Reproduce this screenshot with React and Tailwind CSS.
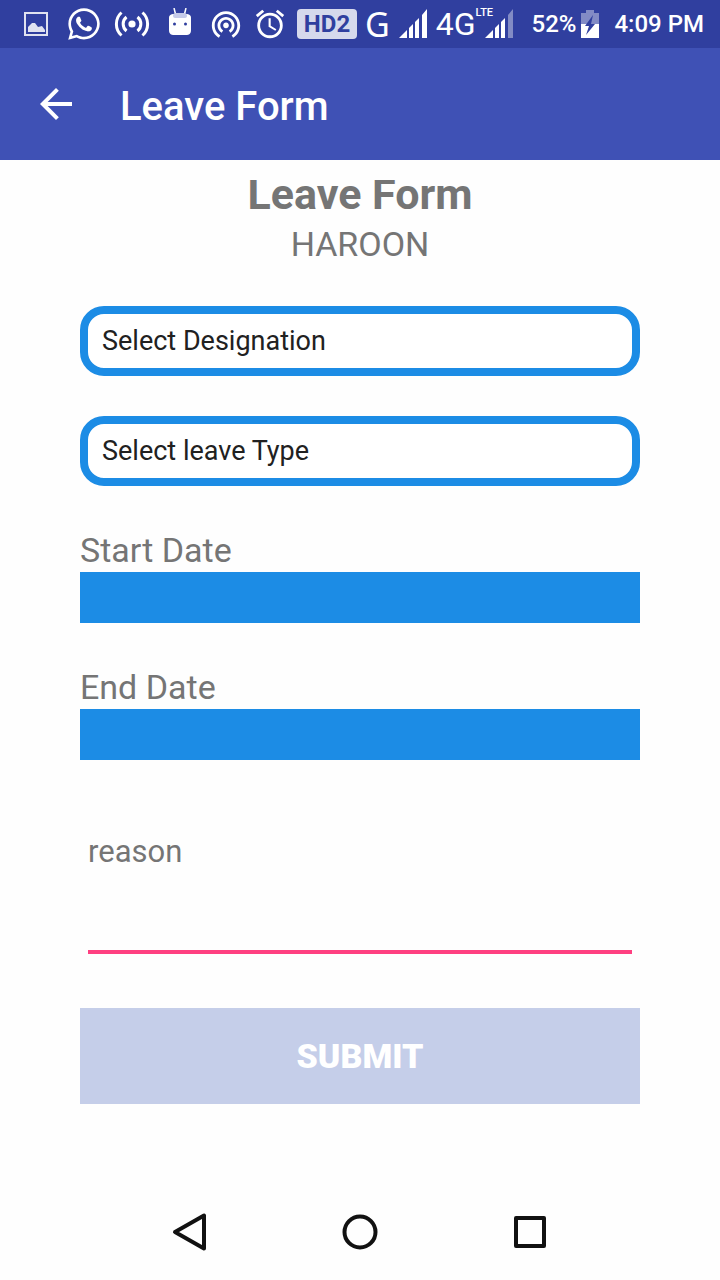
import { useState } from 'react';
import { FaWhatsapp } from 'react-icons/fa';
import { MdAccessAlarm, MdArrowBack, MdWifiTethering } from 'react-icons/md';

const designations = ['Manager', 'Developer', 'Accountant'];
const leaveTypes = ['Casual Leave', 'Sick Leave', 'Annual Leave'];

const PictureIcon = () => (
  <svg width="26" height="26" viewBox="0 0 26 26" className="opacity-85">
    <rect x="2" y="2" width="22" height="22" fill="none" stroke="currentColor" strokeWidth="2" />
    <path d="M5 21v-5l2-2 2-2 3 0 3 4 4-1 3 4v2z" fill="currentColor" />
  </svg>
);

const BroadcastIcon = () => (
  <svg width="36" height="28" viewBox="0 0 36 28" fill="none" stroke="currentColor" strokeWidth="3">
    <circle cx="18" cy="14" r="3.6" fill="currentColor" stroke="none" />
    <path d="M12.5 7a9 9 0 0 0 0 14M23.5 7a9 9 0 0 1 0 14" />
    <path d="M7.5 2.500a15.500 15.500 0 0 0 0 23M28.5 2.500a15.500 15.500 0 0 1 0 23" />
  </svg>
);

const AndroidIcon = () => (
  <svg width="24" height="32" viewBox="0 0 24 32">
    <path d="M6 0l1.500 6M18 0l-1.500 6" stroke="currentColor" strokeWidth="1.500" />
    <path d="M1 10c0-3 2-4 5-4h12c3 0 5 1 5 4v12c0 4-2 5-5 5H6c-3 0-5-1-5-5z" fill="currentColor" />
    <path d="M5 8c0-2 1-3 3-3h8c2 0 3 1 3 3 0 1-1 2-2 2H7c-1 0-2-1-2-2z" fill="#c5cae9" />
    <circle cx="6.500" cy="16" r="1.500" fill="#303f9f" />
    <circle cx="17.500" cy="16" r="1.500" fill="#303f9f" />
  </svg>
);

const SignalIcon = () => (
  <svg width="30" height="30" viewBox="0 0 30 30" fill="currentColor">
    <path d="M1 29l8-8v8zM11 19l4-4v14h-4zM17 13l4-4v20h-4zM24 6l5-6v29h-5z" />
  </svg>
);

const WeakSignalIcon = () => (
  <svg width="30" height="30" viewBox="0 0 30 30" fill="currentColor">
    <path d="M1 29l8-8v8zM11 19l4-4v14h-4zM17 13l4-4v20h-4z" />
    <path d="M24 6l5-6v29h-5z" opacity="0.4" />
  </svg>
);

const BatteryIcon = () => (
  <svg width="20" height="30" viewBox="0 0 20 30" fill="currentColor">
    <path d="M1 4h5V1h8v3h5v11H1z" opacity="0.4" />
    <path d="M1 15h18v14H1z" />
    <path d="M13 6L5 17h4L6 26l9-11h-4z" fill="#303f9f" />
  </svg>
);

function StatusBar() {
  return (
    <div className="flex h-12 items-center bg-[#303f9f] pr-4 pl-3 text-white">
      <div className="flex items-center">
        <span className="flex w-12 justify-center"><PictureIcon /></span>
        <span className="flex w-12 justify-center"><FaWhatsapp size={36} /></span>
        <span className="flex w-12 justify-center"><BroadcastIcon /></span>
        <span className="flex w-12 justify-center"><AndroidIcon /></span>
        <span className="flex w-11 justify-center"><MdWifiTethering size={34} /></span>
        <span className="flex w-11 justify-center"><MdAccessAlarm size={34} /></span>
      </div>
      <div className="ml-[5px] flex items-center gap-2">
        <span className="flex h-[30px] w-15 items-center justify-center rounded bg-[#d6d9ec] text-2xl font-bold text-[#303f9f]">HD2</span>
        <span className="font-['Noto_Sans'] text-[34px] leading-9">G</span>
        <SignalIcon />
        <div className="flex items-center">
          <span className="text-[32px] leading-9">4G</span>
          <div className="relative ml-2">
            <span className="absolute -top-1 -left-2 text-[11px] leading-4 font-medium">LTE</span>
            <WeakSignalIcon />
          </div>
        </div>
      </div>
      <div className="ml-auto flex items-center text-2xl font-medium">
        <span>52%</span>
        <span className="mr-[14px] ml-1"><BatteryIcon /></span>
        <span>4:09 PM</span>
      </div>
    </div>
  );
}

function AppBar() {
  return (
    <header className="flex h-28 items-center gap-10 bg-[#3f51b5] px-8 text-white">
      <button type="button" aria-label="Back">
        <MdArrowBack size={48} />
      </button>
      <span className="pt-1.5 text-[40px] font-medium">Leave Form</span>
    </header>
  );
}

function Dropdown({ label, options, value, onChange }) {
  return (
    <select
      aria-label={label}
      value={value}
      onChange={(e) => onChange(e.target.value)}
      className="h-[70px] w-full appearance-none rounded-3xl border-8 border-[#1c8ce5] bg-white px-[14px] text-[27px] text-[#212121] outline-none"
    >
      <option value="">{label}</option>
      {options.map((option) => (
        <option key={option} value={option}>{option}</option>
      ))}
    </select>
  );
}

function DateField({ id, label, value, onChange }) {
  return (
    <div className="mt-[46px] flex flex-col gap-1">
      <label htmlFor={id} className="text-[34px] leading-9">{label}</label>
      <input
        id={id}
        type="text"
        value={value}
        onChange={(e) => onChange(e.target.value)}
        className="h-[51px] w-full bg-[#1c8ce5] px-2 text-[27px] text-white outline-none"
      />
    </div>
  );
}

function NavBar() {
  return (
    <nav className="flex h-24 items-center px-[105px] text-[#111111]">
      <button type="button" aria-label="Back" className="flex flex-1 justify-center">
        <svg width="40" height="40" viewBox="0 0 40 40" fill="none" stroke="currentColor" strokeWidth="4" strokeLinejoin="round">
          <path d="M5 20L34 3.500v33z" />
        </svg>
      </button>
      <button type="button" aria-label="Home" className="flex flex-1 justify-center">
        <svg width="40" height="40" viewBox="0 0 40 40" fill="none" stroke="currentColor" strokeWidth="4">
          <circle cx="20" cy="20" r="15.500" />
        </svg>
      </button>
      <button type="button" aria-label="Recent apps" className="flex flex-1 justify-center">
        <svg width="40" height="40" viewBox="0 0 40 40" fill="none" stroke="currentColor" strokeWidth="4" strokeLinejoin="round">
          <rect x="6" y="6" width="28" height="28" />
        </svg>
      </button>
    </nav>
  );
}

export default function App() {
  const [designation, setDesignation] = useState('');
  const [leaveType, setLeaveType] = useState('');
  const [startDate, setStartDate] = useState('');
  const [endDate, setEndDate] = useState('');
  const [reason, setReason] = useState('');

  return (
    <div className="flex min-h-screen w-full flex-col bg-[#fefefe] font-['Roboto',sans-serif]">
      <StatusBar />
      <AppBar />
      <main className="flex-1 px-20 pt-5 text-[#757575]">
        <h1 className="overflow-hidden pb-1 text-center text-[43px] leading-7 font-bold">Leave Form</h1>
        <p className="mt-[14px] text-center text-[34px] leading-9">HAROON</p>

        <form onSubmit={(e) => e.preventDefault()}>
          <div className="mt-11 flex flex-col gap-10">
            <Dropdown label="Select Designation" options={designations} value={designation} onChange={setDesignation} />
            <Dropdown label="Select leave Type" options={leaveTypes} value={leaveType} onChange={setLeaveType} />
          </div>
          <DateField id="start-date" label="Start Date" value={startDate} onChange={setStartDate} />
          <DateField id="end-date" label="End Date" value={endDate} onChange={setEndDate} />

          <div className="mt-[74px] px-2">
            <textarea
              aria-label="reason"
              placeholder="reason"
              value={reason}
              onChange={(e) => setReason(e.target.value)}
              className="block h-[120px] w-full resize-none border-b-4 border-[#ff4081] text-[31px] leading-9 outline-none placeholder:text-[#757575]"
            />
          </div>

          <button type="submit" className="mt-[54px] h-24 w-full bg-[#c5cee9] text-[34px] font-black text-white">
            SUBMIT
          </button>
        </form>
      </main>
      <NavBar />
    </div>
  );
}
